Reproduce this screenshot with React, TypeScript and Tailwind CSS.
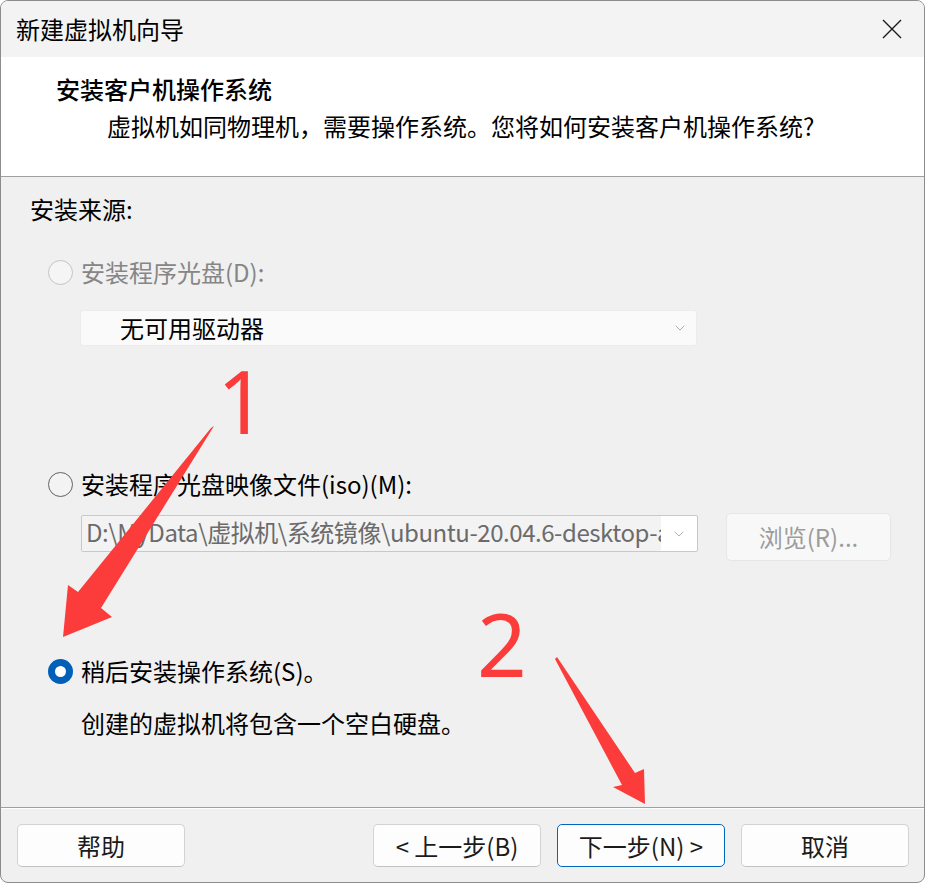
import { ChevronDown } from "lucide-react";

const font = "font-['Noto_Sans_CJK_SC','Noto_Sans',sans-serif]";

function Radio({ state }: { state: "disabled" | "off" | "on" }) {
  if (state === "on") {
    return (
      <span className="flex h-[25px] w-[25px] shrink-0 items-center justify-center rounded-full bg-[#005fb8]">
        <span className="h-[11px] w-[11px] rounded-full bg-white" />
      </span>
    );
  }
  return (
    <span
      className={
        state === "disabled"
          ? "h-[25px] w-[25px] shrink-0 rounded-full border-[1.5px] border-[#c4c4c4] bg-[#f5f5f5]"
          : "h-[25px] w-[25px] shrink-0 rounded-full border-[1.5px] border-[#626262] bg-[#f3f3f3]"
      }
    />
  );
}

function Button({ label, primary }: { label: string; primary?: boolean }) {
  return (
    <button
      className={
        "flex h-[43px] w-[168px] items-center justify-center rounded-[5px] border bg-[#fdfdfd] text-[24px] leading-[32px] text-[#1b1b1b] " +
        (primary ? "border-[#0067c0]" : "border-[#d3d3d3] border-b-[#c2c2c2]")
      }
    >
      {label}
    </button>
  );
}

function Annotations() {
  return (
    <div className="pointer-events-none absolute inset-0">
      <svg width="927" height="884" className="absolute left-0 top-0">
        <polygon
          points="211,428 214,426 101,608 112,617 63,637 68,585 78,592"
          fill="#fc3b3b"
        />
        <polygon
          points="555,659 557,657 635,773 644,769 645,804 613,787 622,785"
          fill="#fc3b3b"
        />
      </svg>
      <span className="absolute left-[217px] top-[357px] font-['Noto_Sans',sans-serif] text-[87px] font-normal leading-none text-[#fc3b3b]">
        1
      </span>
      <span className="absolute left-[477px] top-[600px] font-['Noto_Sans',sans-serif] text-[87px] font-normal leading-none text-[#fc3b3b]">
        2
      </span>
    </div>
  );
}

export default function App() {
  return (
    <div className={`relative h-[884px] w-[927px] overflow-hidden bg-white ${font}`}>
      <div className="flex h-[883px] w-[925px] flex-col overflow-hidden rounded-[8px] border border-[#8c8c8c] bg-[#f0f0f0] text-black">
        {/* title bar */}
        <div className="flex h-[56px] shrink-0 items-center justify-between bg-[#f3f3f3] pl-[15px] pr-[22px]">
          <span className="text-[24px] leading-[32px]">新建虚拟机向导</span>
          <svg width="20" height="20" viewBox="0 0 20 20">
            <path d="M1 1L19 19M19 1L1 19" stroke="#1b1b1b" strokeWidth="1.4" />
          </svg>
        </div>

        {/* header */}
        <div className="h-[120px] shrink-0 border-b border-[#a0a0a0] bg-white pl-[55px] pt-[16px]">
          <p className="text-[24px] font-medium leading-[32px]">安装客户机操作系统</p>
          <p className="mt-[5px] pl-[51px] text-[24px] leading-[32px]">
            虚拟机如同物理机，需要操作系统。您将如何安装客户机操作系统?
          </p>
        </div>

        {/* body */}
        <div className="h-[630px] shrink-0 pl-[29px] pt-[16px] text-[24px] leading-[32px]">
          <p>安装来源:</p>

          <div className="ml-[18px] mt-[31px] flex items-center gap-[8px] text-[#868686]">
            <Radio state="disabled" />
            <span>安装程序光盘(D):</span>
          </div>
          <div className="ml-[50px] mt-[22px] flex h-[36px] w-[617px] items-center justify-between rounded-[3px] border border-[#ececec] bg-[#fafafa] pl-[39px] pr-[8px]">
            <span>无可用驱动器</span>
            <ChevronDown className="h-[16px] w-[16px] text-[#a3a3a3]" strokeWidth={1.3} />
          </div>

          <div className="ml-[18px] mt-[122px] flex items-center gap-[8px]">
            <Radio state="off" />
            <span>安装程序光盘映像文件(iso)(M):</span>
          </div>
          <div className="ml-[51px] mt-[13px] flex items-start gap-[28px]">
            <div className="mt-[2px] flex h-[37px] w-[617px] items-center overflow-hidden rounded-[2px] border border-[#c8c8c8] bg-white">
              <div className="h-full w-[579px] shrink-0 overflow-hidden whitespace-nowrap bg-[#f3f3f3] pl-[4px] tracking-[-0.45px] text-[#6b6b6b]">
                {"D:\\MyData\\虚拟机\\系统镜像\\ubuntu-20.04.6-desktop-a"}
              </div>
              <div className="flex flex-1 justify-center">
                <ChevronDown className="h-[16px] w-[16px] text-[#a3a3a3]" strokeWidth={1.3} />
              </div>
            </div>
            <div className="flex h-[48px] w-[165px] items-center justify-center rounded-[5px] border border-[#e6e6e6] bg-[#f8f8f8] text-[#9c9c9c]">
              浏览(R)...
            </div>
          </div>

          <div className="ml-[18px] mt-[94px] flex items-center gap-[8px]">
            <Radio state="on" />
            <span>稍后安装操作系统(S)。</span>
          </div>
          <p className="ml-[51px] mt-[20px]">创建的虚拟机将包含一个空白硬盘。</p>
        </div>

        {/* footer */}
        <div className="h-[2px] shrink-0 border-t border-[#a0a0a0] bg-white" />
        <div className="flex flex-1 items-start justify-between pl-[16px] pr-[15px] pt-[15px]">
          <Button label="帮助" />
          <div className="flex gap-[16px]">
            <Button label="< 上一步(B)" />
            <Button label="下一步(N) >" primary />
            <Button label="取消" />
          </div>
        </div>
      </div>
      <Annotations />
    </div>
  );
}
